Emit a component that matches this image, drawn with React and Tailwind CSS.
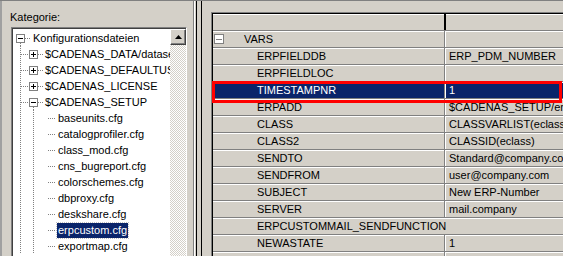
import React from 'react';

const treeItems = [
  { level: 0, label: 'Konfigurationsdateien', box: 'minus' },
  { level: 1, label: '$CADENAS_DATA/dataset', box: 'plus' },
  { level: 1, label: '$CADENAS_DEFAULTUSER', box: 'plus' },
  { level: 1, label: '$CADENAS_LICENSE', box: 'plus' },
  { level: 1, label: '$CADENAS_SETUP', box: 'minus' },
  { level: 2, label: 'baseunits.cfg' },
  { level: 2, label: 'catalogprofiler.cfg' },
  { level: 2, label: 'class_mod.cfg' },
  { level: 2, label: 'cns_bugreport.cfg' },
  { level: 2, label: 'colorschemes.cfg' },
  { level: 2, label: 'dbproxy.cfg' },
  { level: 2, label: 'deskshare.cfg' },
  { level: 2, label: 'erpcustom.cfg', selected: true },
  { level: 2, label: 'exportmap.cfg' },
];

const vars = [
  { name: 'ERPFIELDDB', value: 'ERP_PDM_NUMBER' },
  { name: 'ERPFIELDLOC', value: '' },
  { name: 'TIMESTAMPNR', value: '1', selected: true },
  { name: 'ERPADD', value: '$CADENAS_SETUP/erpcustom' },
  { name: 'CLASS', value: 'CLASSVARLIST(eclass)' },
  { name: 'CLASS2', value: 'CLASSID(eclass)' },
  { name: 'SENDTO', value: 'Standard@company.com' },
  { name: 'SENDFROM', value: 'user@company.com' },
  { name: 'SUBJECT', value: 'New ERP-Number' },
  { name: 'SERVER', value: 'mail.company' },
  { name: 'ERPCUSTOMMAIL_SENDFUNCTION', value: '', wide: true },
  { name: 'NEWASTATE', value: '1' },
  { name: '', value: '' },
];

const dot = { stroke: '#808080', strokeWidth: 1, strokeDasharray: '1 1', shapeRendering: 'crispEdges' };

function ExpandBox({ x, kind }) {
  return (
    <g shapeRendering="crispEdges">
      <rect x={x + 0.5} y={4.5} width={8} height={8} fill="#fff" stroke="#808080" />
      <line x1={x + 2} y1={8.5} x2={x + 7} y2={8.5} stroke="#000" />
      {kind === 'plus' && <line x1={x + 4.5} y1={6} x2={x + 4.5} y2={11} stroke="#000" />}
    </g>
  );
}

// connector lines and +/- boxes drawn left of each tree label
function TreeGutter({ level, box }) {
  if (level === 0) {
    return (
      <svg width="18" height="16" className="shrink-0">
        <ExpandBox x={3} kind={box} />
        <line x1="7.5" y1="13" x2="7.5" y2="16" {...dot} />
        <line x1="12" y1="8.5" x2="18" y2="8.5" {...dot} />
      </svg>
    );
  }
  if (level === 1) {
    return (
      <svg width="30" height="16" className="shrink-0">
        <line x1="7.5" y1="0" x2="7.5" y2="16" {...dot} />
        <line x1="8" y1="8.5" x2="16" y2="8.5" {...dot} />
        <ExpandBox x={16} kind={box} />
        {box === 'minus' && <line x1="20.5" y1="13" x2="20.5" y2="16" {...dot} />}
        <line x1="25" y1="8.5" x2="30" y2="8.5" {...dot} />
      </svg>
    );
  }
  return (
    <svg width="43" height="16" className="shrink-0">
      <line x1="7.5" y1="0" x2="7.5" y2="16" {...dot} />
      <line x1="20.5" y1="0" x2="20.5" y2="16" {...dot} />
      <line x1="35" y1="8.5" x2="43" y2="8.5" {...dot} />
    </svg>
  );
}

function TreeRow({ item }) {
  return (
    <div className="flex h-[16px] items-center whitespace-nowrap">
      <TreeGutter level={item.level} box={item.box} />
      <span
        className={
          item.selected
            ? 'ml-[1px] px-[1px] leading-[15px] bg-[#0a246a] text-white outline outline-1 outline-dotted outline-[#c0c0c0]'
            : 'ml-[1px] px-[1px] leading-[15px] text-black'
        }
      >
        {item.label}
      </span>
    </div>
  );
}

function GridRow({ row }) {
  const rowCls = row.selected ? 'bg-[#0a246a] text-white' : 'text-black';
  return (
    <div className={`flex h-[17px] border-b border-[#808080] shadow-[inset_0_1px_0_#ffffff] ${rowCls}`}>
      {row.wide ? (
        <div className="flex-1 pl-[44px] leading-[16px] whitespace-nowrap">{row.name}</div>
      ) : (
        <>
          <div className="w-[232px] shrink-0 pl-[44px] leading-[16px] whitespace-nowrap overflow-hidden border-r border-[#808080]">
            {row.name}
          </div>
          <div className="flex-1 pl-[3px] leading-[16px] whitespace-nowrap border-l border-white">
            {row.value}
          </div>
        </>
      )}
    </div>
  );
}

export default function App() {
  return (
    <div className="relative w-[563px] h-[256px] overflow-hidden bg-[#d4d0c8] flex font-['Liberation_Sans',Arial,sans-serif] text-[11px] text-black border-t border-[#808080]">
      {/* left: category tree */}
      <div className="w-[195px] shrink-0 flex flex-col border-l-2 border-[#a0a0a0] border-r border-r-white shadow-[inset_-1px_0_0_#808080]">
        <div className="pl-[8px] pt-[10px] h-[26px] leading-[13px]">Kategorie:</div>
        <div className="ml-[9px] mr-[7px] flex-1 min-h-0 flex border-t border-l border-[#808080] border-r border-r-white">
          <div className="flex-1 min-w-0 flex border-t border-l border-[#404040] bg-white">
            <div className="flex-1 min-w-0 overflow-hidden pt-[1px]">
              {treeItems.map((item) => (
                <TreeRow key={item.label} item={item} />
              ))}
            </div>
            {/* vertical scrollbar */}
            <div className="w-[16px] shrink-0 flex flex-col bg-[image:repeating-conic-gradient(#d4d0c8_0%_25%,#ffffff_0%_50%)] bg-[length:2px_2px]">
              <div className="h-[16px] bg-[#d4d0c8] border border-t-white border-l-white border-r-[#404040] border-b-[#404040] shadow-[inset_-1px_-1px_0_#808080] flex items-center justify-center">
                <svg width="7" height="4" viewBox="0 0 7 4">
                  <path d="M3.5 0 L7 4 L0 4 Z" fill="#000" />
                </svg>
              </div>
            </div>
          </div>
        </div>
      </div>

      {/* splitter */}
      <div className="w-[16px] shrink-0 flex">
        <div className="w-[1px] ml-[1px] bg-black" />
        <div className="w-[1px] ml-[4px] bg-black" />
      </div>

      {/* right: variables grid */}
      <div className="flex-1 pt-[11px] min-w-0 overflow-hidden">
        <div className="h-full border-t border-l border-[#808080]">
          <div className="h-full border-t border-l border-black bg-[#d4d0c8] w-[400px]">
            <div className="flex h-[17px] border-b border-[#808080] shadow-[inset_0_1px_0_#ffffff]">
              <div className="w-[233px] shrink-0 border-r-2 border-black" />
              <div className="flex-1" />
            </div>
            <div className="flex h-[17px] border-b border-[#808080] shadow-[inset_0_1px_0_#ffffff]">
              <div className="w-[232px] shrink-0 flex items-center border-r border-[#808080]">
                <svg width="11" height="11" className="ml-[1px] shrink-0" shapeRendering="crispEdges">
                  <rect x="0.5" y="0.5" width="9" height="9" fill="#fff" stroke="#808080" />
                  <line x1="2" y1="5.5" x2="8" y2="5.5" stroke="#808080" />
                </svg>
                <span className="ml-[19px] leading-[16px]">VARS</span>
              </div>
              <div className="flex-1 border-l border-white" />
            </div>
            {vars.map((row, i) => (
              <GridRow key={i} row={row} />
            ))}
          </div>
        </div>
      </div>

      {/* red highlight around selected grid row */}
      <div className="absolute left-[212px] top-[80px] w-[350px] h-[22px] border-[3px] border-[#ff0000] pointer-events-none" />
    </div>
  );
}
